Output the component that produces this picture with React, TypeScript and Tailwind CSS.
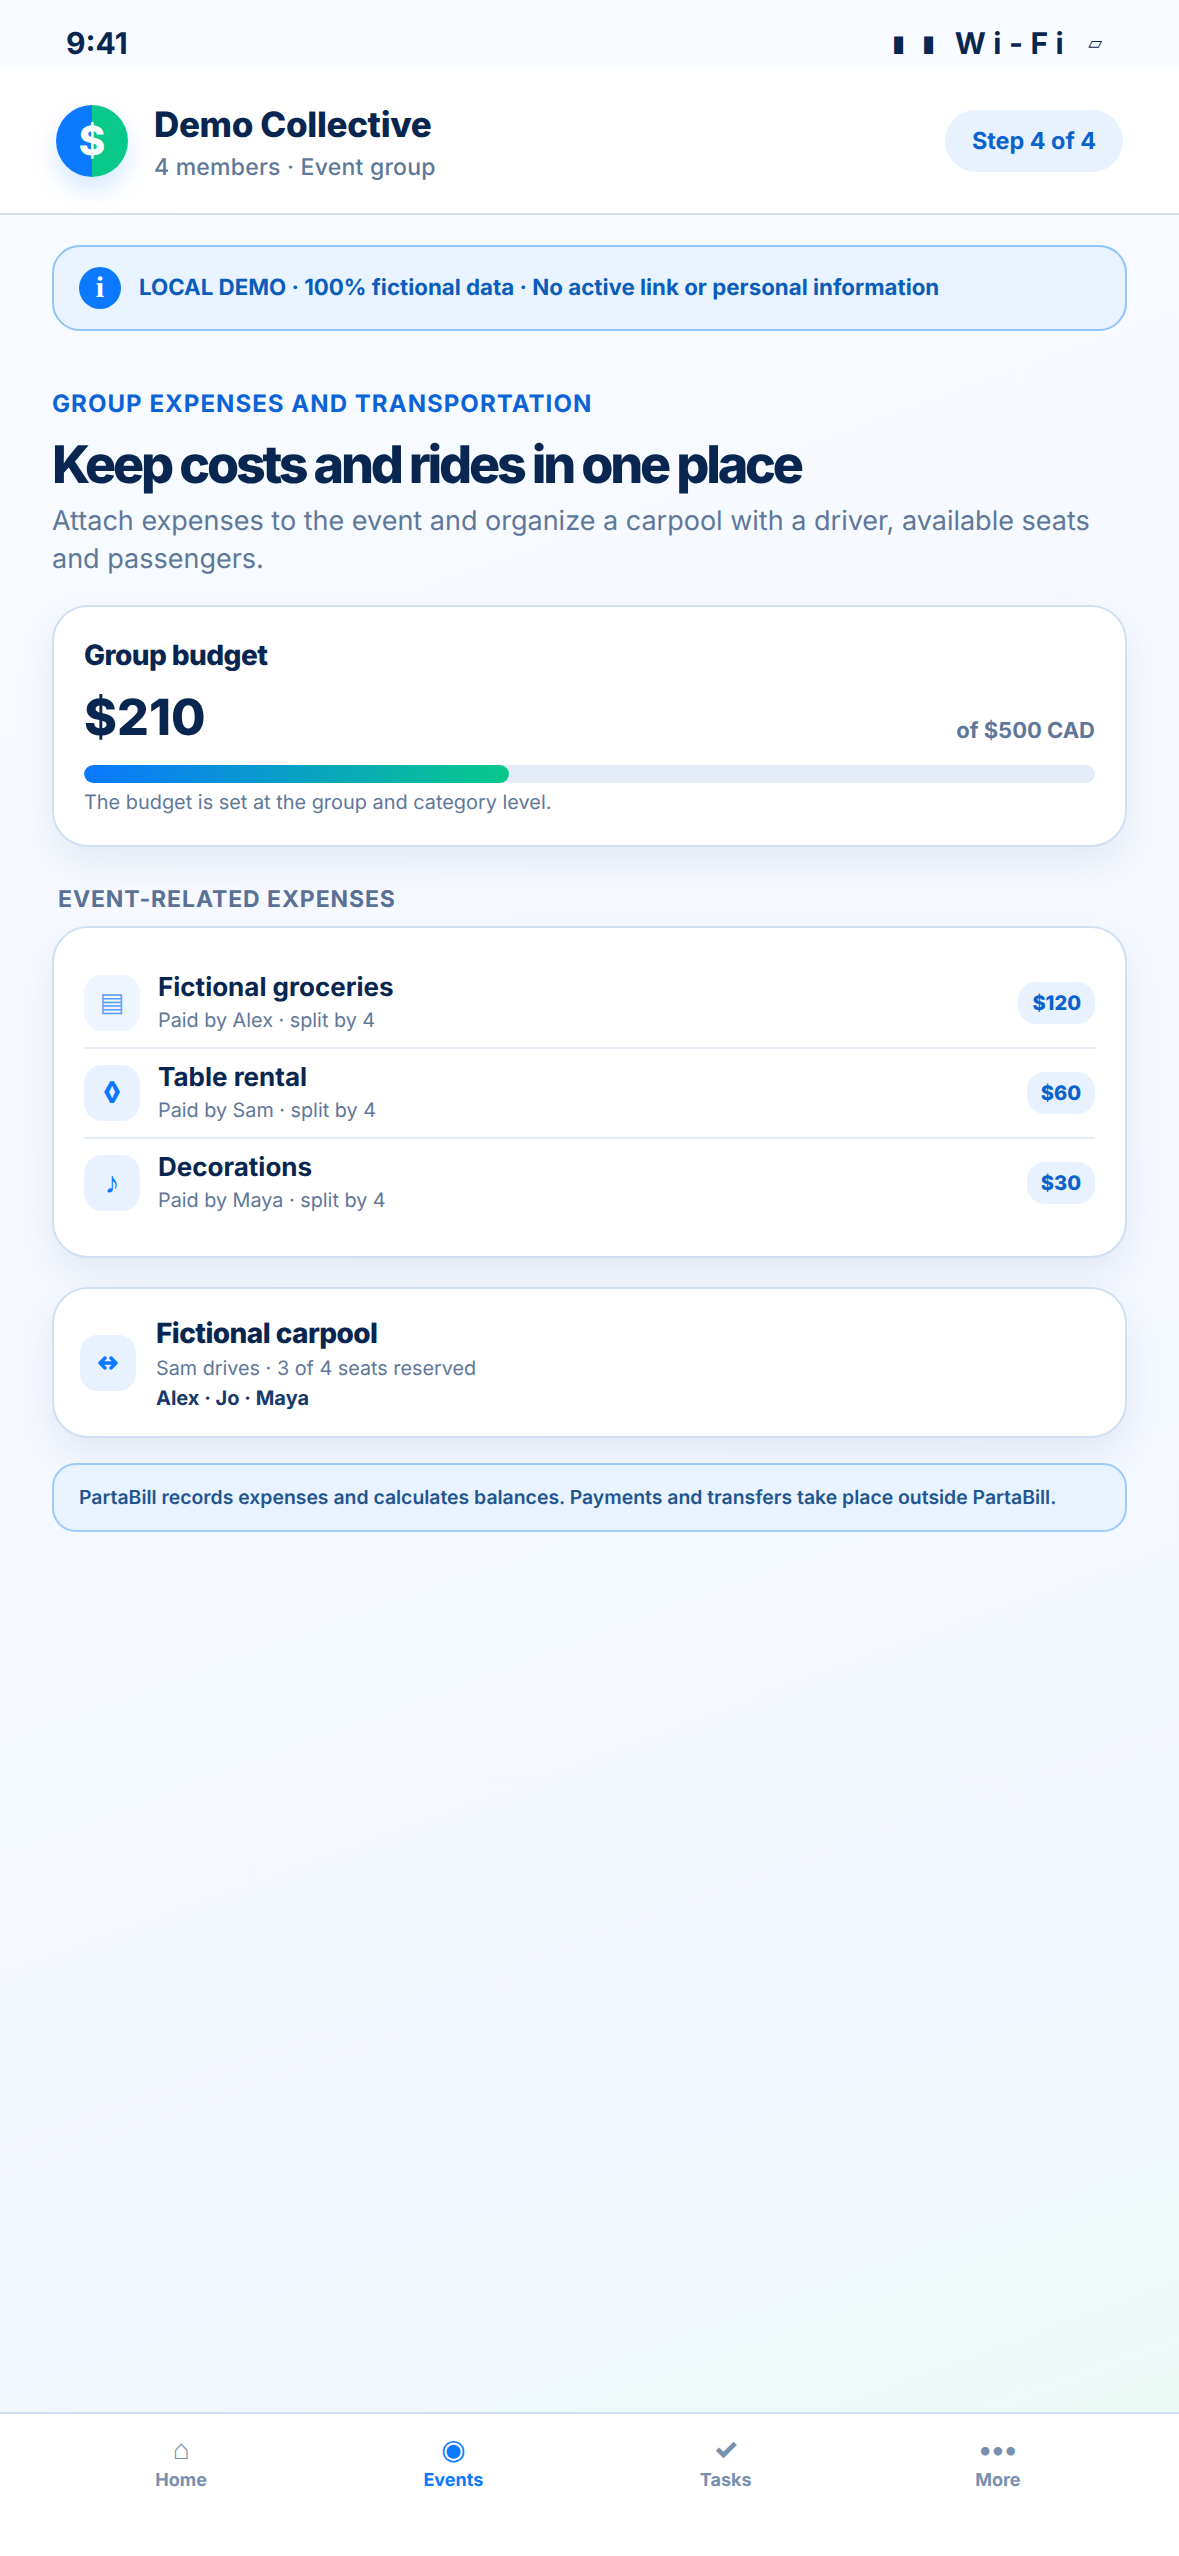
const expenses = [
  { icon: '▤', iconClass: 'text-[26px] font-normal opacity-70', name: 'Fictional groceries', meta: 'Paid by Alex · split by 4', amount: '$120' },
  { icon: '◊', iconClass: 'text-[30px] font-bold', name: 'Table rental', meta: 'Paid by Sam · split by 4', amount: '$60' },
  { icon: '♪', iconClass: 'text-[30px] font-bold', name: 'Decorations', meta: 'Paid by Maya · split by 4', amount: '$30' },
];

const tabs = [
  { icon: '⌂', label: 'Home', active: false, iconClass: 'text-[28px]' },
  { icon: '◉', label: 'Events', active: true, iconClass: 'text-[28px]' },
  { icon: '✓', label: 'Tasks', active: false, iconClass: 'text-[28px] font-extrabold' },
  { icon: '•••', label: 'More', active: false, iconClass: 'text-[27px] font-bold' },
];

const App = () => {
  return (
    <div className="flex h-[2556px] w-[1179px] flex-col overflow-hidden bg-[linear-gradient(160deg,#f8fbff_0%,#f3f7ff_80%,#ebfbf5_97%)] font-['Inter','Liberation_Sans',sans-serif] text-[#08264f] antialiased [text-rendering:geometricPrecision]">
      <div className="flex h-[68px] items-start justify-between bg-[#f8fbff] pl-[66px] pr-[77px] pt-[26px]">
        <span className="text-[30px] font-bold leading-[36px]">9:41</span>
        <div className="flex items-center font-bold">
          <span className="flex gap-[18px] text-[22px] leading-[36px]">
            <span>▮</span>
            <span>▮</span>
          </span>
          <span className="ml-[20px] text-[30px] leading-[36px] tracking-[0.25em]">Wi-Fi</span>
          <span className="ml-[17px] text-[18px] font-normal leading-[36px]">▱</span>
        </div>
      </div>

      <header className="flex h-[147px] items-center justify-between border-b-2 border-[#d0e0f2] bg-white px-[56px]">
        <div className="flex items-center gap-[26px]">
          <div className="flex h-[72px] w-[72px] items-center justify-center rounded-full bg-[linear-gradient(90deg,#0a78ff_50%,#08c98a_50%)] text-[40px] font-extrabold leading-none text-white shadow-[0_12px_24px_rgba(10,120,255,0.18)]">
            $
          </div>
          <div className="mt-[6px]">
            <div className="text-[35px] font-extrabold leading-[40px] tracking-[-0.01em]">Demo Collective</div>
            <div className="mt-[7px] text-[23px] font-medium leading-[30px] tracking-[0.01em] text-[#5f7899]">4 members · Event group</div>
          </div>
        </div>
        <div className="flex h-[62px] w-[178px] items-center justify-center rounded-full bg-[#e8f2ff] text-[23.4px] font-bold text-[#0a63cc]">
          Step 4 of 4
        </div>
      </header>

      <main className="flex flex-1 flex-col px-[52px] pt-[30px]">
        <div className="flex h-[86px] items-center gap-[18px] rounded-[28px] border-2 border-[#90c4fb] bg-[#e9f3ff] px-[25px]">
          <span className="flex h-[42px] w-[42px] items-center justify-center rounded-full bg-[#0a78ff] font-['Liberation_Serif',serif] text-[30px] font-bold leading-none text-white">i</span>
          <span className="text-[22.3px] font-bold text-[#0a5db9]">LOCAL DEMO · 100% fictional data · No active link or personal information</span>
        </div>

        <div className="mt-[58px] text-[24px] font-bold leading-[30px] tracking-[0.044em] text-[#0b63d6]">
          GROUP EXPENSES AND TRANSPORTATION
        </div>
        <h1 className="mt-[14px] text-[52px] font-extrabold leading-[64px] tracking-[-0.062em]">Keep costs and rides in one place</h1>
        <p className="mt-[5px] text-[27px] leading-[38px] text-[#5f7899]">
          Attach expenses to the event and organize a carpool with a driver, available seats and passengers.
        </p>

        <section className="mt-[27px] rounded-[36px] border-2 border-[#d0e0f2] bg-white px-[30px] pb-[28px] pt-[30px] shadow-[0_16px_36px_rgba(16,56,120,0.08)]">
          <div className="text-[28px] font-extrabold leading-[36px] tracking-[-0.02em]">Group budget</div>
          <div className="mt-[15px] flex items-end justify-between">
            <span className="text-[50px] font-extrabold leading-[60px]">$210</span>
            <span className="text-[22px] font-bold leading-[34px] text-[#5f7899]">of $500 CAD</span>
          </div>
          <div className="mt-[17px] h-[18px] overflow-hidden rounded-full bg-[#e4ecf7]">
            <div className="h-full w-[42%] rounded-full bg-[linear-gradient(90deg,#0a78ff,#08c98a)]"></div>
          </div>
          <div className="mt-[4px] text-[19.9px] leading-[30px] text-[#5f7899]">The budget is set at the group and category level.</div>
        </section>

        <div className="ml-[6px] mt-[38px] text-[23px] font-bold leading-[28px] tracking-[0.04em] text-[#5a7095]">EVENT-RELATED EXPENSES</div>

        <section className="mt-[13px] rounded-[36px] border-2 border-[#d0e0f2] bg-white px-[30px] pb-[29px] pt-[31px] shadow-[0_16px_36px_rgba(16,56,120,0.08)]">
          {expenses.map((item) => (
            <div key={item.name} className="flex items-center justify-between border-b-2 border-[#e4ecf7] py-[13px] last:border-b-0">
              <div className="flex items-center gap-[18px]">
                <span className={`flex h-[56px] w-[56px] items-center justify-center rounded-[18px] bg-[#e8f2ff] leading-none text-[#0a78ff] ${item.iconClass}`}>{item.icon}</span>
                <div>
                  <div className="text-[26px] font-bold leading-[32px]">{item.name}</div>
                  <div className="mt-[2px] text-[19.8px] leading-[28px] text-[#5f7899]">{item.meta}</div>
                </div>
              </div>
              <span className="flex h-[42px] items-center rounded-[18px] bg-[#e8f2ff] px-[14px] text-[20px] font-extrabold text-[#0a63cc]">{item.amount}</span>
            </div>
          ))}
        </section>

        <section className="mt-[29px] flex h-[151px] items-center gap-[20px] rounded-[36px] border-2 border-[#d0e0f2] bg-white px-[26px] shadow-[0_16px_36px_rgba(16,56,120,0.08)]">
          <span className="flex h-[56px] w-[56px] items-center justify-center rounded-[18px] bg-[#e8f2ff]">
            <svg width="22" height="14" viewBox="0 0 22 14" fill="none" stroke="#0a78ff" strokeWidth="3.4" strokeLinecap="round" strokeLinejoin="round">
              <path d="M3 7h16M8 2 3 7l5 5M14 2l5 5-5 5" />
            </svg>
          </span>
          <div className="mt-[2px]">
            <div className="text-[28px] font-extrabold leading-[36px] tracking-[-0.02em]">Fictional carpool</div>
            <div className="mt-[2px] text-[19.8px] leading-[30px] text-[#5f7899]">Sam drives · 3 of 4 seats reserved</div>
            <div className="text-[20px] font-bold leading-[30px] text-[#173a6b]">Alex · Jo · Maya</div>
          </div>
        </section>

        <div className="mt-[25px] flex h-[69px] items-center rounded-[24px] border-2 border-[#9ccbfc] bg-[#e9f3ff] px-[25px] text-[19.4px] font-semibold text-[#1f5690]">
          PartaBill records expenses and calculates balances. Payments and transfers take place outside PartaBill.
        </div>
      </main>

      <nav className="grid h-[144px] grid-cols-4 border-t-2 border-[#d0e0f2] bg-white px-[45px] pt-[18px]">
        {tabs.map((tab) => (
          <div key={tab.label} className={`flex flex-col items-center ${tab.active ? 'text-[#0a78ff]' : 'text-[#7890ae]'}`}>
            <span className={`flex h-[34px] items-center leading-none ${tab.iconClass}`}>{tab.icon}</span>
            <span className="mt-[3px] text-[18px] font-bold leading-[24px]">{tab.label}</span>
          </div>
        ))}
      </nav>
    </div>
  );
};

export default App;
